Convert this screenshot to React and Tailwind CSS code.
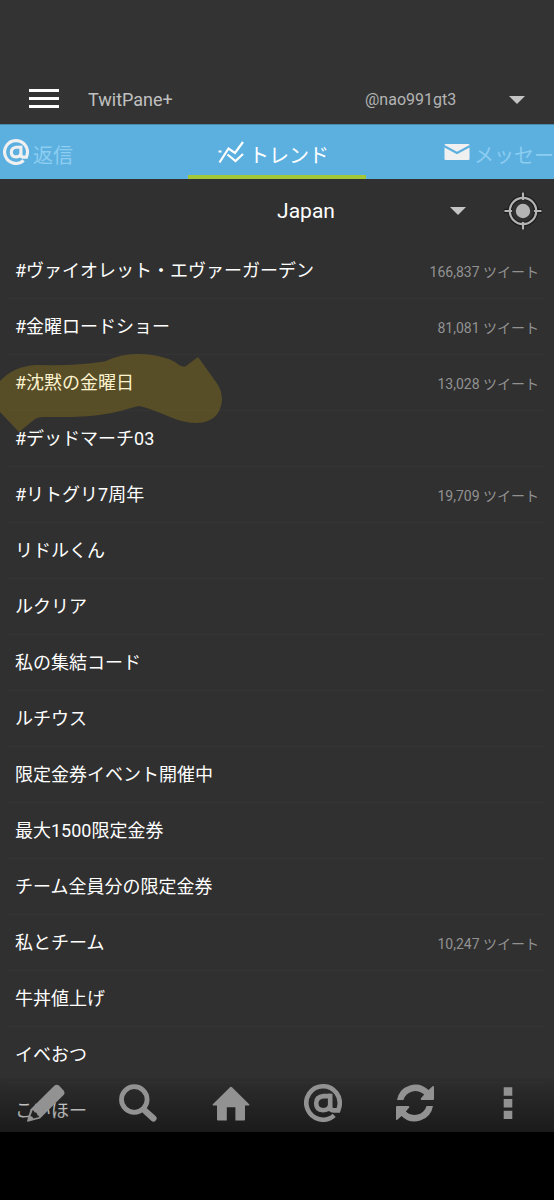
import React, { useState } from "react";

const trends = [
  { name: "#ヴァイオレット・エヴァーガーデン", count: 166837 },
  { name: "#金曜ロードショー", count: 81081 },
  { name: "#沈黙の金曜日", count: 13028, marked: true },
  { name: "#デッドマーチ03" },
  { name: "#リトグリ7周年", count: 19709 },
  { name: "リドルくん" },
  { name: "ルクリア" },
  { name: "私の集結コード" },
  { name: "ルチウス" },
  { name: "限定金券イベント開催中" },
  { name: "最大1500限定金券" },
  { name: "チーム全員分の限定金券" },
  { name: "私とチーム", count: 10247 },
  { name: "牛丼値上げ" },
  { name: "イベおつ" },
  { name: "こいほー" },
];

const AtIcon = ({ className }) => (
  <svg viewBox="0 0 38 38" fill="none" stroke="currentColor" strokeWidth="4.6" className={className}>
    <path d="M30.2 31.4A16.7 16.7 0 1 1 34.9 24.2L34.2 26.4H29.5Q26.2 26.4 26.2 23V9.8" />
    <path d="M27 12.1H19.5Q12.2 12.8 12.2 19.2Q12.2 25.8 19 26.2Q24.5 26.2 26.2 21.5" />
  </svg>
);

const TrendIcon = ({ className }) => (
  <svg viewBox="0 0 28 24" fill="none" stroke="currentColor" strokeWidth="2.2" className={className}>
    <path d="M2.5 22.5L11.5 8.5L18 13L26 2" />
    <path d="M1.5 11.5H4.5M10.5 14.5L18.5 21L26 14" />
  </svg>
);

const MailIcon = ({ className }) => (
  <svg viewBox="0 0 26 18" className={className}>
    <rect x="0.5" y="1" width="25" height="16" rx="1" fill="currentColor" />
    <path d="M0 3L13 10L26 3" fill="none" stroke="#5cb0e0" strokeWidth="2" />
  </svg>
);

const LocateIcon = ({ className }) => (
  <svg viewBox="0 0 38 38" fill="none" className={className}>
    <g stroke="#1c1c1c" strokeWidth="4.4">
      <circle cx="19" cy="19" r="13.2" />
      <path d="M19 0V7M19 31V38M0 19H7M31 19H38" />
    </g>
    <g stroke="#b4b4b4" strokeWidth="2.2">
      <circle cx="19" cy="19" r="13.2" />
      <path d="M19 0.5V8M19 30V37.5M0.5 19H8M30 19H37.5" />
    </g>
    <circle cx="19" cy="19" r="7.2" fill="#b4b4b4" />
  </svg>
);

const Caret = () => (
  <svg viewBox="0 0 16 9" className="pointer-events-none absolute right-0 top-1/2 h-[9px] w-4 -translate-y-1/2">
    <path d="M0 0.5H16L8 8.5Z" fill="#c4c4c4" />
  </svg>
);

const PencilIcon = () => (
  <svg viewBox="0 0 38 38" fill="currentColor" className="size-[38px]">
    <path d="M27 2Q29.5 -0.2 32 1.6L36.6 6.6Q38.4 9 36.6 11L13 34.5L0.8 37.8Q0 37.8 0 37L3.6 25.2Z" />
    <path d="M5.6 26.2Q7.2 26.4 7.4 28.2Q10.2 28.4 10.4 31.2Q12 31.4 12.2 33L6.4 34.6Q5.6 32.2 3.4 32Z" fill="#222222" />
  </svg>
);

const SearchIcon = () => (
  <svg viewBox="0 0 38 38" fill="none" stroke="currentColor" className="size-[38px]">
    <circle cx="15.3" cy="15.5" r="12.8" strokeWidth="4.8" />
    <path d="M23 24L27 28" strokeWidth="4" />
    <path d="M26.8 27.5L34.4 34.4" strokeWidth="6.4" strokeLinecap="round" />
  </svg>
);

const HomeIcon = () => (
  <svg viewBox="0 0 38 38" fill="currentColor" className="size-[38px]">
    <path d="M18 3.2Q19 2.3 20 3.2L37.2 20.2Q38 21.6 36.5 21.6H33V35.5Q33 36.6 32 36.6H23.4V23.2H14.8V36.6H6Q5 36.6 5 35.5V21.6H1.5Q0 21.6 0.8 20.2Z" />
  </svg>
);

const RefreshIcon = () => (
  <svg viewBox="0 0 38 38" fill="currentColor" className="size-[38px]">
    <g id="refresh-half">
      <path d="M1 16A18.6 18.6 0 0 1 32.5 6L36.6 2.2Q38 1.4 38 3V15Q38 16 37 16H25.4Q24.2 15.4 25 14.2L28.2 10.6A12.6 12.6 0 0 0 7.4 16Z" />
    </g>
    <use href="#refresh-half" transform="rotate(180 19 19)" />
  </svg>
);

const MoreIcon = () => (
  <svg viewBox="0 0 38 38" fill="currentColor" className="size-[38px]">
    <path d="M14.7 3.3H23.3V11.7H14.7ZM14.7 15H23.3V23.4H14.7ZM14.7 26.7H23.3V35H14.7Z" />
  </svg>
);

const actions = [
  { label: "ツイート作成", icon: <PencilIcon /> },
  { label: "検索", icon: <SearchIcon /> },
  { label: "ホーム", icon: <HomeIcon /> },
  { label: "返信", icon: <AtIcon className="size-[38px]" /> },
  { label: "更新", icon: <RefreshIcon /> },
  { label: "メニュー", icon: <MoreIcon /> },
];

export default function App() {
  const [account, setAccount] = useState("@nao991gt3");
  const [place, setPlace] = useState("Japan");

  return (
    <div className="flex h-screen flex-col overflow-hidden bg-[#303030] font-['Roboto','Noto_Sans_CJK_JP',sans-serif] text-white">
      {/* App bar */}
      <header className="flex items-center bg-[#333333] px-[29px] pb-2 pt-[84px]">
        <button type="button" aria-label="メニューを開く" className="flex h-8 flex-col justify-center gap-[5px] pb-1">
          <span className="h-[3px] w-[30px] bg-white" />
          <span className="h-[3px] w-[30px] bg-white" />
          <span className="h-[3px] w-[30px] bg-white" />
        </button>
        <h1 className="ml-[29px] flex-1 text-lg text-[#c0c0c0]">TwitPane+</h1>
        <div className="relative">
          <select
            aria-label="アカウント"
            value={account}
            onChange={(e) => setAccount(e.target.value)}
            className="w-40 appearance-none bg-transparent text-base text-[#b4b4b4] outline-none"
          >
            <option>@nao991gt3</option>
          </select>
          <Caret />
        </div>
      </header>

      {/* Tabs */}
      <nav className="flex h-[55px] shrink-0 justify-between overflow-hidden border-t border-[#4a88ac] bg-[#5cb0e0] text-xl">
        <button type="button" className="flex w-[188px] shrink-0 items-center gap-1 pl-[3px] text-[#8ccdf0]">
          <AtIcon className="size-[26px] text-[#f0f0f0]" />
          <span className="pt-2">返信</span>
        </button>
        <button type="button" className="flex flex-1 items-center justify-center border-b-4 border-[#a4c639] pr-2 pt-1">
          <TrendIcon className="h-6 w-7" />
          <span className="pl-1 pt-2">トレンド</span>
        </button>
        <button type="button" className="flex w-[188px] shrink-0 items-center gap-1 whitespace-nowrap pl-[78px] text-[#8ccdf0]">
          <MailIcon className="h-[18px] w-[26px] shrink-0 text-[#f0f0f0]" />
          <span className="pt-2">メッセージ</span>
        </button>
      </nav>

      {/* Location picker */}
      <div className="flex h-16 shrink-0 items-center pl-[146px] pr-3">
        <div className="relative flex-1">
          <select
            aria-label="地域"
            value={place}
            onChange={(e) => setPlace(e.target.value)}
            className="w-full appearance-none bg-transparent pt-0.5 text-center text-[21px] outline-none"
          >
            <option>Japan</option>
          </select>
          <Caret />
        </div>
        <button type="button" aria-label="現在地" className="ml-[38px]">
          <LocateIcon className="size-[38px]" />
        </button>
      </div>

      <main className="relative min-h-0 flex-1">
        <ul className="h-full overflow-y-auto [scrollbar-width:none]">
          {trends.map((trend) => (
            <li key={trend.name} className="relative px-2">
              <a href="#trend" className="flex h-14 items-center justify-between border-b border-[#343434] px-[7px]">
                <span className="text-lg">{trend.name}</span>
                {trend.count && (
                  <span className="pt-0.5 text-sm text-[#929292]">{trend.count.toLocaleString("en-US")} ツイート</span>
                )}
              </a>
              {/* Highlighter stroke */}
              {trend.marked && (
                <svg
                  viewBox="0 0 222 80"
                  className="pointer-events-none absolute left-0 top-0 z-10 h-20 w-[222px] overflow-visible"
                >
                  <path
                    d="M0 26Q14 11 36 10Q82 11 106 6Q120 -1 138 -1Q160 -1 175 7Q182 13 186 11L198 2L216 27Q222 35 222 45Q220 67 197 68Q184 68 170 62Q146 52 139 51Q130 53 124 55Q104 61 72 62H44Q38 62 35 64L19 77L0 57Z"
                    fill="#f5c400"
                    fillOpacity="0.2"
                  />
                </svg>
              )}
            </li>
          ))}
        </ul>

        {/* Toolbar over the end of the list */}
        <div className="absolute inset-x-0 bottom-0 z-20 flex h-[54px] bg-gradient-to-b from-black/5 to-black/45 pb-1 text-[#929292]">
          {actions.map((action) => (
            <button key={action.label} type="button" aria-label={action.label} className="flex flex-1 items-center justify-center">
              {action.icon}
            </button>
          ))}
        </div>
      </main>

      <footer className="h-[68px] shrink-0 bg-black" />
    </div>
  );
}
